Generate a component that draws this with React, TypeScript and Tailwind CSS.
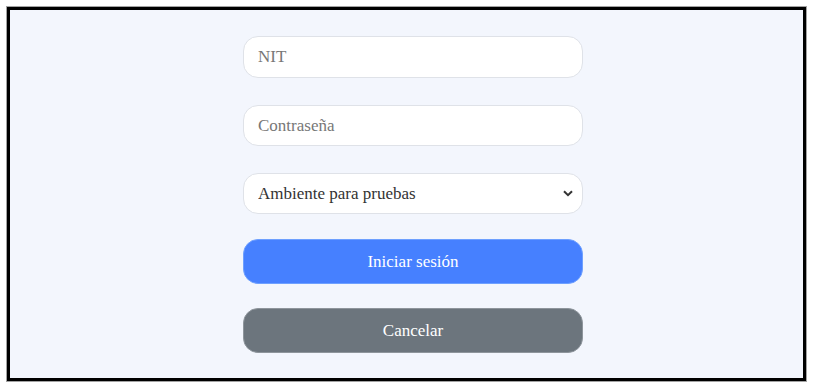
import { useState } from 'react'

export default function App() {
  const [nit, setNit] = useState('')
  const [password, setPassword] = useState('')
  const [env, setEnv] = useState('pruebas')

  return (
    <div className="w-[813px] h-[388px] bg-white pt-[6px] pl-[6px]">
      {/* Frame */}
      <div className="w-[801px] h-[376px] border border-[#a3a3a3]">
        <div className="h-full border-[3px] border-black bg-[#f3f6fd]">
          <form
            className="flex flex-col w-[340px] ml-[233px] pt-[26px] font-['Liberation_Serif',serif] text-[17px]"
            onSubmit={(e) => e.preventDefault()}
          >
            <input
              type="text"
              placeholder="NIT"
              value={nit}
              onChange={(e) => setNit(e.target.value)}
              className="h-[42px] rounded-[15px] border-[1.5px] border-[#dfe2e8] bg-white px-[14px] text-[#333] placeholder:text-[#777] outline-none"
            />
            <input
              type="password"
              placeholder="Contraseña"
              value={password}
              onChange={(e) => setPassword(e.target.value)}
              className="mt-[27px] h-[41px] rounded-[15px] border-[1.5px] border-[#dfe2e8] bg-white px-[14px] text-[#333] placeholder:text-[#777] outline-none"
            />
            <div className="relative mt-[27px]">
              <select
                value={env}
                onChange={(e) => setEnv(e.target.value)}
                className="w-full h-[41px] appearance-none rounded-[15px] border-[1.5px] border-[#dfe2e8] bg-white pl-[14px] pr-8 text-[#333] outline-none"
              >
                <option value="pruebas">Ambiente para pruebas</option>
                <option value="produccion">Ambiente de producción</option>
              </select>
              <svg
                className="pointer-events-none absolute right-[10px] top-[17px]"
                width="10"
                height="7"
                viewBox="0 0 10 7"
              >
                <path d="M1 1.2 L5 5.2 L9 1.2" fill="none" stroke="#333" strokeWidth="2" />
              </svg>
            </div>
            <button
              type="submit"
              className="mt-[25px] h-[45px] rounded-[15px] border border-[#6ea0ff] bg-[#4680ff] text-white"
            >
              Iniciar sesión
            </button>
            <button
              type="button"
              className="mt-[24px] h-[45px] rounded-[15px] border border-[#8e959c] bg-[#6c757d] text-white"
            >
              Cancelar
            </button>
          </form>
        </div>
      </div>
    </div>
  )
}
